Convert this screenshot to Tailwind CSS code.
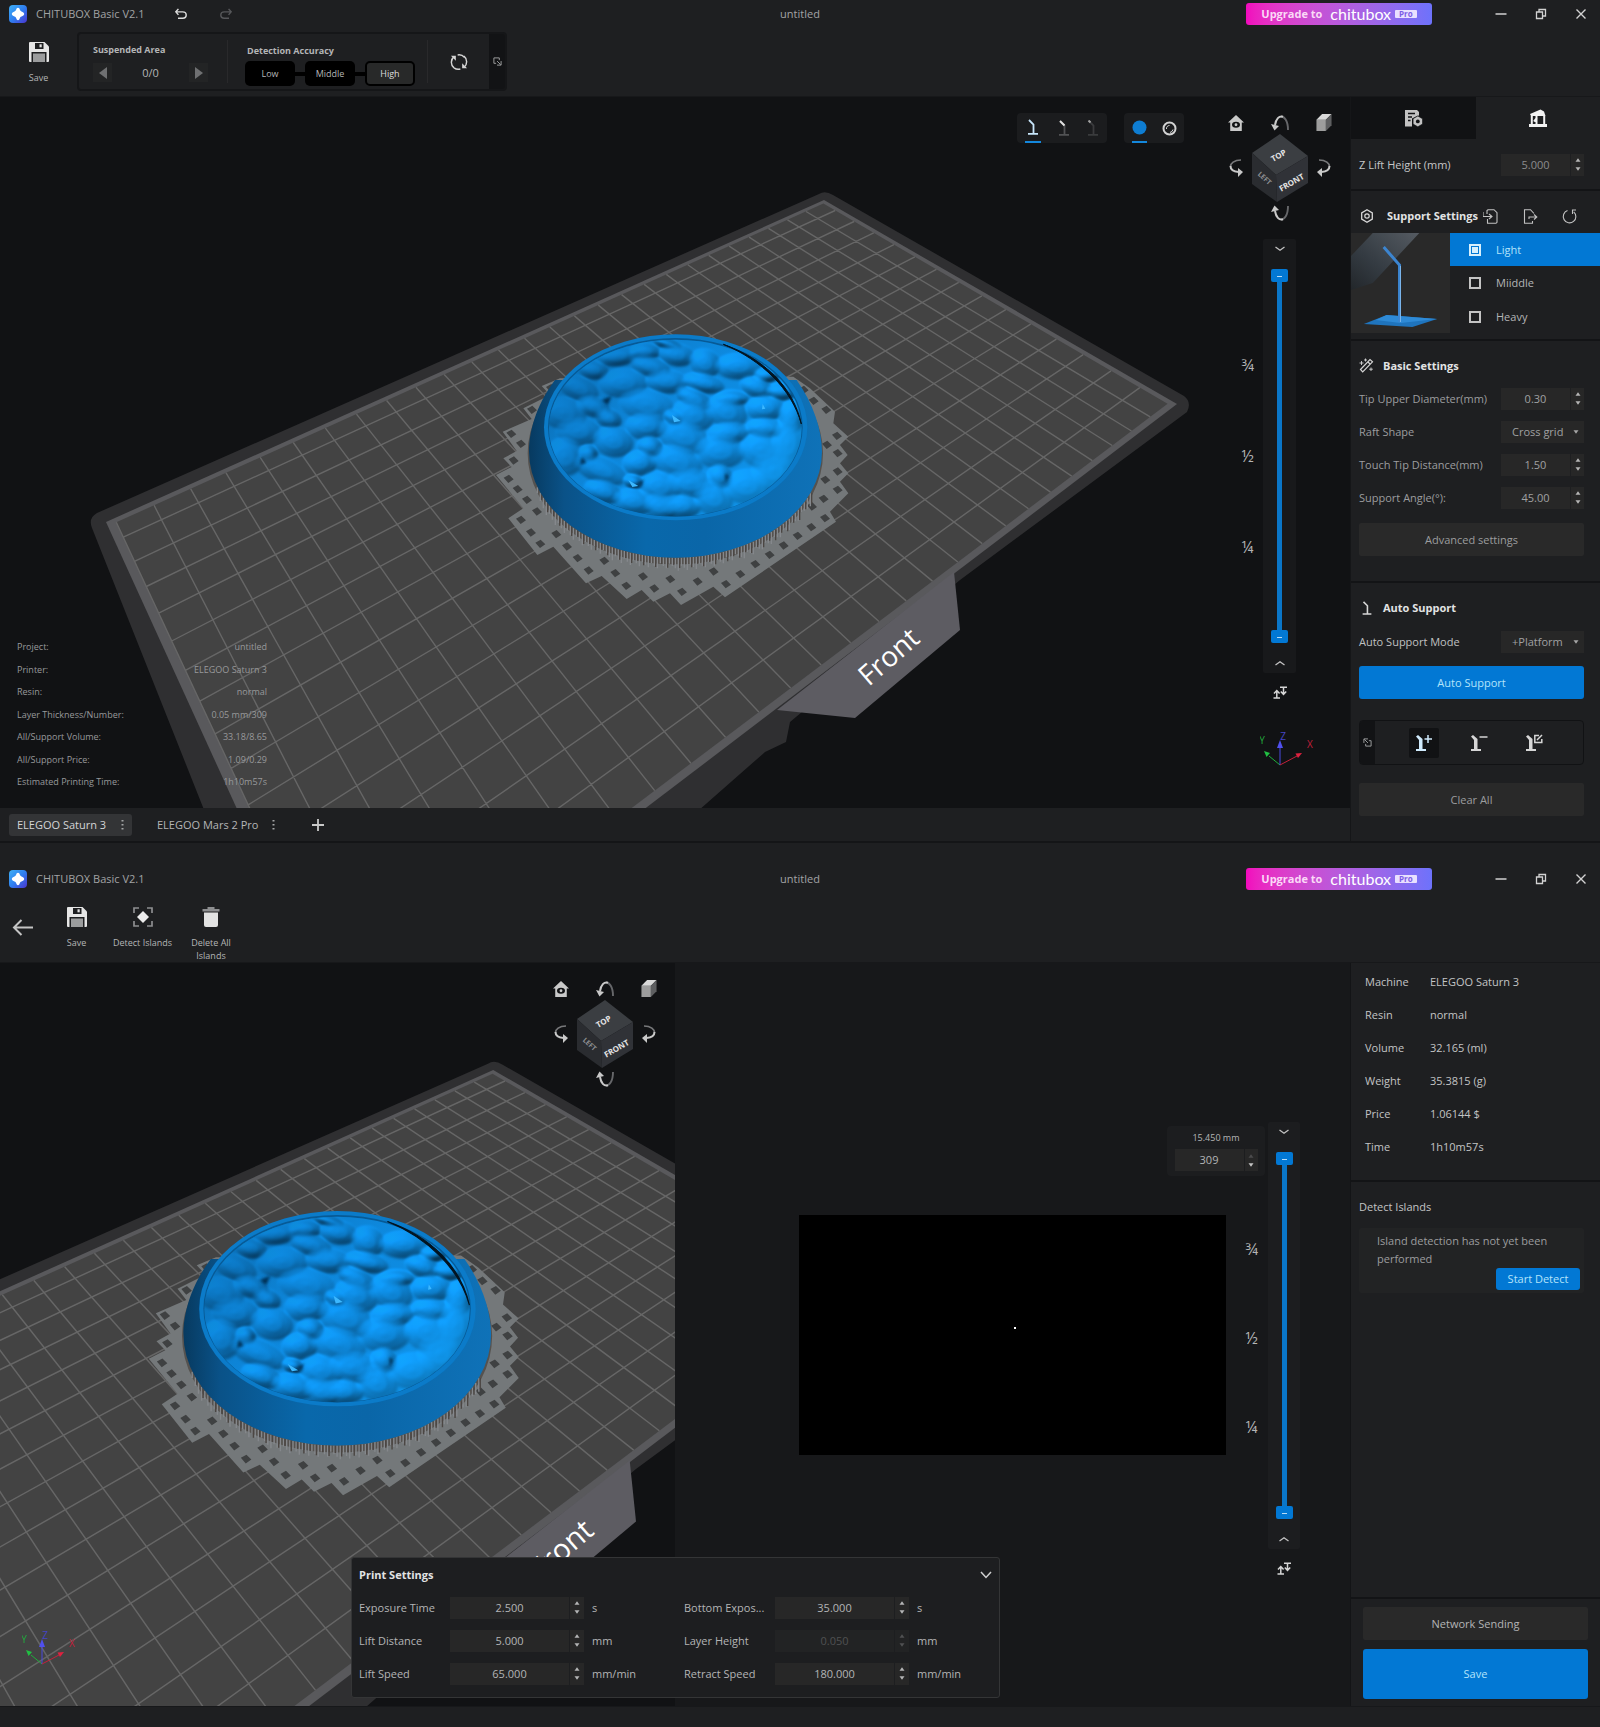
<!DOCTYPE html>
<html lang="en">
<head>
<meta charset="utf-8">
<meta name="viewport" content="width=device-width, initial-scale=1">
<title>CHITUBOX Basic V2.1</title>
<script src="https://cdn.jsdelivr.net/npm/@tailwindcss/browser@4"></script>
</head>
<body class="flex min-h-screen flex-col bg-[#1e1f21] font-['Open_Sans','Noto_Sans',sans-serif] text-[11px] leading-4 text-[#b4b5b6]">

<!-- Shared icons and the build-plate scene -->
<svg class="absolute h-0 w-0" aria-hidden="true">
  <defs>
    <linearGradient id="gLogo" x1="0" y1="0" x2="1" y2="1"><stop offset="0" stop-color="#3fb0f5"/><stop offset=".5" stop-color="#2f7ff0"/><stop offset="1" stop-color="#4a34cf"/></linearGradient>
    <linearGradient id="gBody" x1="0" y1="0" x2="1" y2="0"><stop offset="0" stop-color="#073a60"/><stop offset=".12" stop-color="#0a5288"/><stop offset=".4" stop-color="#0968ab"/><stop offset=".6" stop-color="#0a66a8"/><stop offset="1" stop-color="#0f72b8"/></linearGradient>
    <linearGradient id="gTint" x1="0" y1=".2" x2="1" y2=".8"><stop offset="0" stop-color="#05406f" stop-opacity=".45"/><stop offset=".45" stop-color="#0a6bb5" stop-opacity=".1"/><stop offset=".75" stop-color="#12a4ff" stop-opacity=".1"/><stop offset="1" stop-color="#12a8ff" stop-opacity=".6"/></linearGradient>
    <radialGradient id="gBump"><stop offset="0" stop-color="#fff"/><stop offset=".45" stop-color="#fff" stop-opacity=".82"/><stop offset=".8" stop-color="#fff" stop-opacity=".35"/><stop offset="1" stop-color="#fff" stop-opacity="0"/></radialGradient>
    <filter id="relief" x="-5%" y="-5%" width="110%" height="110%" color-interpolation-filters="sRGB"><feGaussianBlur stdDeviation="5"/><feDiffuseLighting surfaceScale="9" diffuseConstant="1.100" lighting-color="#0f96f2"><feDistantLight azimuth="235" elevation="58"/></feDiffuseLighting></filter>
    <filter id="soft" x="-20%" y="-20%" width="140%" height="140%"><feGaussianBlur stdDeviation="4"/></filter>
    <clipPath id="cTop"><ellipse cx="646" cy="384" rx="379" ry="265"/></clipPath>
    <symbol id="i-logo" viewBox="0 0 18 18"><rect width="18" height="18" rx="4" fill="url(#gLogo)"/><path d="M9 2.8c1 0 1.600.9 1.900 2 .3.900.7 1.300 1.600 1.600 1.400.500 2.700 1.400 2.700 2.600s-1.300 2-2.700 2.500c-.9.300-1.300.7-1.600 1.600-.3 1.200-.9 2.100-1.900 2.100s-1.600-.9-1.900-2.100c-.3-.9-.7-1.300-1.600-1.600C4.100 11 2.800 10.200 2.800 9s1.300-2.100 2.700-2.600c.9-.3 1.300-.7 1.600-1.600.3-1.100.9-2 1.900-2z" fill="#fff"/></symbol>
    <symbol id="i-undo" viewBox="0 0 16 14"><path d="M5 1 2 4.500 5 8M2.300 4.500H10a4 3.700 0 0 1 0 7.500H4.500" fill="none" stroke="currentColor" stroke-width="1.700"/></symbol>
    <symbol id="i-save" viewBox="0 0 20 20"><path d="M0 1a1 1 0 0 1 1-1h14.500L20 4.500V19a1 1 0 0 1-1 1H1a1 1 0 0 1-1-1z" fill="#e6e6e6"/><path d="M6 1h8.500v6H6z" fill="#1e1f21"/><path d="M10.500 2.300h2.200v3h-2.200z" fill="#e6e6e6"/><path d="M2.500 20V10h15v10z" fill="#1e1f21"/><path d="M4 20v-8.500h12V20z" fill="#9b9c9d"/></symbol>
    <symbol id="i-refresh" viewBox="0 0 20 20"><g fill="none" stroke="#d4d4d4" stroke-width="1.600"><path d="M4.500 16.500A8 8 0 0 1 4.500 4M8.500 2.200A8 8 0 0 1 16 4.800"/><path d="M15.500 3.500a8 8 0 0 1 0 12.500M11.500 17.800a8 8 0 0 1-7-1.300"/></g><path d="M1 3h5.500v5.500zM19 17h-5.500v-5.500z" fill="#d4d4d4"/></symbol>
    <symbol id="i-dock" viewBox="0 0 10 10"><path d="M3.500 7H1V1h6v2.500" fill="none" stroke="#a7a8a9" stroke-width="1"/><path d="M4.500 4.500l4 4M9 4.500V9H4.500" fill="none" stroke="#a7a8a9" stroke-width="1"/></symbol>
    <symbol id="i-min" viewBox="0 0 12 12"><path d="M.5 6h11" stroke="#d2d2d2" stroke-width="1.500"/></symbol>
    <symbol id="i-restore" viewBox="0 0 12 12"><path d="M1.500 4h6v6.500h-6zM4 4V1.500h6.500V8h-3" fill="none" stroke="#d2d2d2" stroke-width="1.300"/></symbol>
    <symbol id="i-close" viewBox="0 0 12 12"><path d="M1.500 1.500l9 9M10.500 1.500l-9 9" stroke="#d2d2d2" stroke-width="1.400"/></symbol>
    <symbol id="i-home" viewBox="0 0 18 18"><path d="M9 0 18 8.500h-2.500V18h-13V8.500H0z" fill="#c9c9c9"/><ellipse cx="9" cy="11" rx="4.500" ry="3.300" fill="#111214"/><circle cx="9" cy="11" r="1.600" fill="#c9c9c9"/></symbol>
    <symbol id="i-cubelet" viewBox="0 0 16 18"><path d="M0 6h10v12H0z" fill="#9d9d9d"/><path d="M0 6 6 0h10l-6 6z" fill="#d9d9d9"/><path d="M10 6l6-6v12l-6 6z" fill="#5e5f61"/></symbol>
    <symbol id="i-turn" viewBox="0 0 18 16"><path d="M17 15C17 5 13 1.500 10 1.500" fill="none" stroke="#66676a" stroke-width="1.900"/><path d="M12 1.700C8 .5 5 4 4 10" fill="none" stroke="#c9c9c9" stroke-width="2"/><path d="M0 9 8 11l-4.500 4.500z" fill="#c9c9c9"/></symbol>
    <symbol id="i-swing" viewBox="0 0 14 18"><path d="M12 1C5 1 1.500 4.500 1.500 7.500" fill="none" stroke="#77787a" stroke-width="1.700"/><path d="M1.500 7c0 3.500 3 5.500 8 6" fill="none" stroke="#c9c9c9" stroke-width="2"/><path d="M9 9l5 4-5 5z" fill="#c9c9c9"/></symbol>
    <symbol id="i-pillar" viewBox="0 0 12 16"><path d="M2 1l4.500 4.500V14M1 14.800h10" fill="none" stroke="currentColor" stroke-width="1.800"/></symbol>
    <symbol id="i-ends" viewBox="0 0 14 13"><path d="M.5 12h6.500M3.800 12V5M1 7.500 3.800 4.500 6.600 7.500M7 1.200h7M10.500 1.200V8M7.800 5.500l2.700 3 2.700-3" fill="none" stroke="#d6d6d6" stroke-width="1.500"/></symbol>
    <symbol id="i-down" viewBox="0 0 10 6"><path d="M.5 1 5 4.200 9.500 1" fill="none" stroke="#c4c4c4" stroke-width="1.300"/></symbol>
    <symbol id="i-up" viewBox="0 0 10 6"><path d="M.5 5 5 1.800 9.500 5" fill="none" stroke="#c4c4c4" stroke-width="1.300"/></symbol>
    <symbol id="t-up" viewBox="0 0 6 4"><path d="M3 .3 5.500 3.700H.5z" fill="currentColor"/></symbol>
    <symbol id="t-down" viewBox="0 0 6 4"><path d="M3 3.700.5.300h5z" fill="currentColor"/></symbol>
    <symbol id="i-viewcube" viewBox="0 0 58 70">
      <path d="M29 1 57 23 25 42 1 20z" fill="#3b3e42"/><path d="M1 20 25 42 26 69 1 51z" fill="#2a2c30"/><path d="M57 23 25 42 26 69 57 50z" fill="#303237"/>
      <g font-family="Open Sans, sans-serif" font-weight="700" fill="#e4e4e4" text-anchor="middle"><text transform="translate(29 25) rotate(-29)" font-size="8">TOP</text><text transform="translate(42 52) rotate(-30)" font-size="8">FRONT</text><text transform="translate(12 47) rotate(42)" font-size="7" fill="#8e9093">LEFT</text></g>
    </symbol>
    <symbol id="i-axis" viewBox="0 0 60 46" overflow="visible">
      <g stroke-width="1"><path d="M20 38 9 29" stroke="#1fae3b"/><path d="M20 38V21" stroke="#4a4ae0"/><path d="M20 38l17-9" stroke="#c3213b"/></g>
      <path d="M4 24l6 2-3.500 4z" fill="#21c043"/><path d="M20 13l3 8h-6z" fill="#5050ee"/><path d="M42 26l-4 5-2.500-4.500z" fill="#e0213f"/>
      <g font-family="Open Sans, sans-serif" font-size="10" text-anchor="middle"><text x="2" y="17" fill="#21a83d">Y</text><text x="23" y="13" fill="#4545c4">Z</text><text x="50" y="21" fill="#c11f3a">X</text></g>
    </symbol>

    <g id="scene">
      <path d="M819 194Q825 190 833 195L1184 396Q1192 402 1187 412L960 580 790 722 786 742 765 752 690 818 675 850H220L92 528Q88 518 97 513Z" fill="#2f2f31"/>
      <path id="frame" fill="#59595c"/>
      <path id="surface" fill="#434343"/>
      <path id="gridlines" fill="none" stroke="#666" stroke-width="1.400"/>
      <path d="M954 572l6 58-105 88-78-8z" fill="#5d5c62"/>
      <text transform="translate(895 664) rotate(-41)" font-family="Open Sans, sans-serif" font-size="28" fill="#fff" text-anchor="middle">Front</text>
      <g transform="translate(460 300) scale(.33333)">
        <path d="M300 235 245 258l25 27-80 40 25 32-87 38 42 58-40 22 25 26-47 24 82 100-45 30 87 110 48-25 98 110 47-22 75 69 45-27 35 35 50-25 33 35 97-55 35 32 333-227-18-30 55-55-25-35 25-25-25-30 23-25-23-30 25-25-45-40 5-35-75-70-50-35z" fill="#74787a"/>
        <path id="holes" fill="#3f4142"/>
        <ellipse cx="646" cy="460" rx="432" ry="322" fill="none" stroke="#55524f" stroke-width="22"/>
        <path id="sticks" fill="none" stroke="#85888c" stroke-width="4"/>
        <path id="gaps" fill="none" stroke="#4b4643" stroke-width="4"/>
        <path d="M207 455C207 400 225 320 285 240H1010C1060 310 1086 390 1086 455A439.500 318 0 0 1 207 455z" fill="url(#gBody)"/>
        <ellipse cx="647" cy="382" rx="395" ry="279" fill="#0b7bc9"/>
        <ellipse cx="646" cy="382" rx="382" ry="268" fill="#075a96"/>
        <g clip-path="url(#cTop)">
          <g filter="url(#relief)"><rect x="240" y="90" width="810" height="590" fill="#fff" fill-opacity=".02"/><g id="bumps" fill="url(#gBump)"></g></g>
          <ellipse cx="646" cy="384" rx="382" ry="268" fill="url(#gTint)"/>
          <path d="M425 300l30-12-12 28zM365 470l15 18-20 6zM530 550l22-12-8 20zM795 520l12 8-10 24z" fill="#042e52" filter="url(#soft)"/>
          <path d="M636 345l26 18-20 4zM505 540l30 18-18 3zM908 312l8 14-10 2z" fill="#3cb8ff"/>
        </g>
        <path d="M790 133C910 175 1000 260 1024 372C996 268 905 180 790 133z" fill="#03131f" stroke="#03131f" stroke-width="3"/>
      </g>
    </g>
  </defs>
</svg>

<!-- ============ Prepare window ============ -->
<section aria-label="Prepare" class="flex flex-col border-b-2 border-[#141517]">
  <header class="relative flex h-7 items-center pl-[9px] pr-[13px]">
    <svg class="h-[18px] w-[18px]"><use href="#i-logo"/></svg>
    <span class="ml-[9px] w-[137px] text-[#a2a3a5]">CHITUBOX Basic V2.1</span>
    <button aria-label="Undo" class="flex text-[#dcdcdc]"><svg class="h-3 w-4"><use href="#i-undo"/></svg></button>
    <button aria-label="Redo" class="ml-[29px] flex -scale-x-100 text-[#56575a]"><svg class="h-3 w-4"><use href="#i-undo"/></svg></button>
    <span class="absolute left-1/2 -translate-x-1/2 text-[#a2a3a5]">untitled</span>
    <button class="ml-auto flex h-[22px] w-[186px] items-center justify-center gap-2 rounded-[3px] bg-linear-to-r from-[#f208bd] to-[#6d72fb] font-bold text-[#fbd9f7]"><span>Upgrade to</span><span class="flex items-center gap-1"><span class="font-['Lato',sans-serif] text-[16px] font-normal text-white">chitubox</span><span class="rounded-[1px] bg-[#e9e0ff] px-1 text-[8px] leading-2 text-[#7d5be6]">Pro</span></span></button>
    <div class="ml-[63px] flex gap-7">
      <button aria-label="Minimize" class="flex"><svg class="h-3 w-3"><use href="#i-min"/></svg></button>
      <button aria-label="Restore" class="flex"><svg class="h-3 w-3"><use href="#i-restore"/></svg></button>
      <button aria-label="Close" class="flex"><svg class="h-3 w-3"><use href="#i-close"/></svg></button>
    </div>
  </header>

  <div class="flex h-[69px] items-start border-b border-[#17181a] pt-1">
    <button class="flex w-[77px] flex-col items-center gap-[10px] pt-[10px] text-[9px] leading-3"><svg class="h-5 w-5"><use href="#i-save"/></svg>Save</button>
    <div class="flex h-[59px] w-[430px] overflow-hidden rounded border-2 border-[#151618]">
      <div class="my-[6px] w-[149px] border-r border-[#29292b] pl-[14px] pt-[4px]">
        <div class="text-[9px] font-bold leading-3">Suspended Area</div>
        <div class="mt-[7px] flex w-[115px] items-center justify-between">
          <button aria-label="Previous area" class="flex h-[19px] w-[19px] items-center justify-center bg-[#232425]"><svg class="h-3 w-2" viewBox="0 0 8 12"><path d="M8 0v12L0 6z" fill="#6f7072"/></svg></button>
          <span>0/0</span>
          <button aria-label="Next area" class="flex h-[19px] w-[19px] items-center justify-center bg-[#232425]"><svg class="h-3 w-2" viewBox="0 0 8 12"><path d="M0 0v12l8-6z" fill="#6f7072"/></svg></button>
        </div>
      </div>
      <div class="my-[6px] w-[200px] border-r border-[#29292b] pl-[17px] pt-[5px]">
        <div class="pl-[2px] text-[9px] font-bold leading-3">Detection Accuracy</div>
        <div class="mt-1 flex items-center text-[9px]">
          <button class="h-[25px] w-[50px] rounded-[5px] bg-black">Low</button><span class="h-1 w-[10px] bg-black"></span>
          <button class="h-[25px] w-[50px] rounded-[5px] bg-black">Middle</button><span class="h-1 w-[10px] bg-black"></span>
          <button class="h-[25px] w-[50px] rounded-[5px] border-2 border-black bg-[#282929] text-[#dcdcdc]">High</button>
        </div>
      </div>
      <button aria-label="Refresh" class="flex flex-1 items-center justify-center"><svg class="h-[18px] w-[18px]"><use href="#i-refresh"/></svg></button>
      <button aria-label="Undock" class="flex w-4 items-center justify-center bg-[#121315]"><svg class="h-[9px] w-[9px]"><use href="#i-dock"/></svg></button>
    </div>
  </div>

  <main class="flex">
    <div class="flex min-w-0 flex-1 flex-col">
      <div class="relative flex-1 overflow-hidden bg-[#111214]">
        <svg class="absolute inset-0 h-full w-full" role="img" aria-label="Build plate with model"><use href="#scene" transform="translate(0 -97)"/></svg>

        <dl class="absolute bottom-[20px] left-[17px] flex h-[147px] w-[250px] flex-col justify-between text-[9px] leading-3 text-[#98999b]">
          <div class="flex justify-between"><dt>Project:</dt><dd>untitled</dd></div>
          <div class="flex justify-between"><dt>Printer:</dt><dd>ELEGOO Saturn 3</dd></div>
          <div class="flex justify-between"><dt>Resin:</dt><dd>normal</dd></div>
          <div class="flex justify-between"><dt>Layer Thickness/Number:</dt><dd>0.05 mm/309</dd></div>
          <div class="flex justify-between"><dt>All/Support Volume:</dt><dd>33.18/8.65</dd></div>
          <div class="flex justify-between"><dt>All/Support Price:</dt><dd>1.09/0.29</dd></div>
          <div class="flex justify-between"><dt>Estimated Printing Time:</dt><dd>1h10m57s</dd></div>
        </dl>

        <div class="absolute right-[166px] top-4 flex gap-[17px]">
          <div class="flex h-[30px] w-[90px] items-center justify-around rounded bg-[#1b1c1e]">
            <button aria-label="Show supports" class="flex h-full items-center border-b-2 border-[#1487dc] px-[2px] text-[#c8e6fb]"><svg class="h-4 w-3"><use href="#i-pillar"/></svg></button>
            <button aria-label="Show tips" class="flex text-[#515254]"><svg class="h-4 w-3"><use href="#i-pillar"/><path d="M2 1l4.500 4.500" stroke="#e2e2e2" stroke-width="2"/></svg></button>
            <button aria-label="Hide supports" class="flex text-[#3a3b3d]"><svg class="h-4 w-3"><use href="#i-pillar"/><path d="M1.500.5l2 2" stroke="#a2a2a2" stroke-width="2"/></svg></button>
          </div>
          <div class="flex h-[30px] w-[60px] items-center justify-around rounded bg-[#1b1c1e]">
            <button aria-label="Solid view" class="flex h-full items-center border-b-2 border-[#1487dc]"><svg class="h-[15px] w-[15px]" viewBox="0 0 15 15"><circle cx="7.500" cy="7.500" r="7" fill="#0e7dd2"/></svg></button>
            <button aria-label="Outline view" class="flex"><svg class="h-[15px] w-[15px]" viewBox="0 0 15 15"><circle cx="7.500" cy="7.500" r="6" fill="#1b1c1e" stroke="#d3d3d3" stroke-width="2"/><path d="M4.500 8a3 3 0 0 1 3-3.500M11 8.500a4 4 0 0 1-3 3" fill="none" stroke="#d3d3d3"/></svg></button>
          </div>
        </div>

        <div class="absolute right-[17px] top-[17px] grid w-[106px] grid-cols-[18px_1fr_18px] items-center justify-items-center gap-y-0.5">
          <button aria-label="Home view" class="flex"><svg class="h-4 w-4"><use href="#i-home"/></svg></button>
          <button aria-label="Rotate up" class="flex"><svg class="h-4 w-[18px]"><use href="#i-turn"/></svg></button>
          <button aria-label="Perspective" class="flex"><svg class="h-[17px] w-4"><use href="#i-cubelet"/></svg></button>
          <button aria-label="Rotate left" class="flex"><svg class="h-[18px] w-[14px]"><use href="#i-swing"/></svg></button>
          <svg class="h-[70px] w-[58px]"><use href="#i-viewcube"/></svg>
          <button aria-label="Rotate right" class="flex -scale-x-100"><svg class="h-[18px] w-[14px]"><use href="#i-swing"/></svg></button>
          <button aria-label="Rotate down" class="col-start-2 flex -scale-y-100"><svg class="h-4 w-[18px]"><use href="#i-turn"/></svg></button>
        </div>

        <div class="absolute right-[54px] top-[142px] flex items-center gap-[9px]">
          <div class="flex h-[198px] flex-col justify-between text-[16px] leading-4"><span>¾</span><span>½</span><span>¼</span></div>
          <div class="flex h-[434px] w-[33px] flex-col items-center justify-between rounded-[2px] bg-[#18191b] py-[7px]">
            <button aria-label="Upper layer down" class="flex"><svg class="h-[6px] w-[10px]"><use href="#i-down"/></svg></button>
            <div class="relative h-[374px] w-[17px]">
              <span class="absolute inset-y-1 left-[6px] w-[5px] bg-[#0a76c8]"></span>
              <input aria-label="Upper clip" type="range" value="100" class="absolute inset-0 m-0 h-full w-[17px] appearance-none bg-transparent [direction:rtl] [writing-mode:vertical-lr] [&::-webkit-slider-thumb]:h-[13px] [&::-webkit-slider-thumb]:w-[17px] [&::-webkit-slider-thumb]:appearance-none [&::-webkit-slider-thumb]:rounded-[2px] [&::-webkit-slider-thumb]:bg-[#0278d4]">
              <input aria-label="Lower clip" type="range" value="0" class="absolute inset-0 m-0 h-full w-[17px] appearance-none bg-transparent [direction:rtl] [writing-mode:vertical-lr] [&::-webkit-slider-thumb]:h-[13px] [&::-webkit-slider-thumb]:w-[17px] [&::-webkit-slider-thumb]:appearance-none [&::-webkit-slider-thumb]:rounded-[2px] [&::-webkit-slider-thumb]:bg-[#0278d4]">
              <span class="absolute left-[6px] top-[7px] h-px w-[5px] bg-[#b9dcf5]"></span>
              <span class="absolute bottom-[5px] left-[6px] h-px w-[5px] bg-[#b9dcf5]"></span>
            </div>
            <button aria-label="Lower layer up" class="flex"><svg class="h-[6px] w-[10px]"><use href="#i-up"/></svg></button>
          </div>
        </div>
        <button aria-label="Swap clip direction" class="absolute right-[63px] top-[589px] flex"><svg class="h-[13px] w-[14px]"><use href="#i-ends"/></svg></button>
        <svg class="absolute right-[30px] top-[630px] h-[46px] w-[60px]"><use href="#i-axis"/></svg>
      </div>

      <nav class="flex h-[33px] items-center pl-[9px]">
        <button class="flex h-[22px] w-[123px] items-center justify-between rounded-[3px] bg-[#333436] px-2 text-[#d4d5d6]">ELEGOO Saturn 3<svg class="h-3 w-[3px]" viewBox="0 0 3 12"><path d="M.5 1h2v1.500h-2zM.5 5h2v1.500h-2zM.5 9h2v1.500h-2z" fill="#a4a5a6"/></svg></button>
        <button class="flex h-[22px] w-[151px] items-center justify-between pl-[25px] pr-2">ELEGOO Mars 2 Pro<svg class="h-3 w-[3px]" viewBox="0 0 3 12"><path d="M.5 1h2v1.500h-2zM.5 5h2v1.500h-2zM.5 9h2v1.500h-2z" fill="#a4a5a6"/></svg></button>
        <button aria-label="Add printer" class="ml-[29px] flex"><svg class="h-3 w-3" viewBox="0 0 12 12"><path d="M6 0v12M0 6h12" stroke="#c9c9c9" stroke-width="1.800"/></svg></button>
      </nav>
    </div>

    <aside class="w-[250px] border-l border-[#151618] pb-[25px]">
      <div class="grid h-[42px] grid-cols-[125px_1fr]">
        <button aria-label="Slice settings" class="flex items-center justify-center bg-[#111214]"><svg class="h-[17px] w-[18px]" viewBox="0 0 18 17"><path d="M0 0h12l2 2v3.500l-2 .5-5 2.500v8H0z" fill="#c2c2c2"/><path d="M3 3.500h7M3 7h4M3 10.500h2.500" stroke="#111214" stroke-width="1.300"/><path d="M12.800 6l4.700 2.700v5.400l-4.700 2.700-4.700-2.700V8.700z" fill="#c2c2c2" stroke="#111214" stroke-width=".6"/><circle cx="12.800" cy="11.400" r="1.900" fill="#111214"/></svg></button>
        <button aria-label="Support settings" class="flex items-center justify-center"><svg class="h-[18px] w-[18px]" viewBox="0 0 18 18"><path d="M1 5 11.500.500 15 2.500 16.500 7H2z" fill="#f2f2f2"/><path d="M2.800 7v9M7.500 7v9M15.200 7v9M8 8.500l-3 4" stroke="#f2f2f2" stroke-width="2"/><path d="M0 15h18v3H0z" fill="#f2f2f2"/></svg></button>
      </div>
      <div class="flex h-[52px] items-center justify-between border-b-2 border-[#131416] pl-2 pr-4 pt-px">
        <label for="zlift" class="text-[#c6c7c8]">Z Lift Height (mm)</label>
        <div class="flex h-[22px] w-[83px] gap-px"><input id="zlift" value="5.000" class="w-[69px] bg-[#272727] text-center text-[#8b8c8d]"><div class="flex w-[13px] flex-col items-center justify-around bg-[#272727] py-[2px] text-[#b5b5b5]"><button aria-label="Increase" class="flex"><svg class="h-1 w-[6px]"><use href="#t-up"/></svg></button><button aria-label="Decrease" class="flex"><svg class="h-1 w-[6px]"><use href="#t-down"/></svg></button></div></div>
      </div>

      <div class="border-b-2 border-[#131416] pb-[6px]">
        <div class="flex h-[42px] items-center pl-[10px] pr-[23px] pt-2">
          <svg class="h-[14px] w-3" viewBox="0 0 12 14"><path d="M6 .8 11.300 3.900v6.200L6 13.200.7 10.100V3.900z" fill="none" stroke="#d9d9d9" stroke-width="1.300"/><circle cx="6" cy="7" r="2.200" fill="none" stroke="#d9d9d9" stroke-width="1.200"/></svg>
          <h2 class="ml-[14px] w-[96px] whitespace-nowrap font-bold text-[#e2e3e4]">Support Settings</h2>
          <div class="flex flex-1 justify-between">
            <button aria-label="Import" class="flex"><svg class="h-[15px] w-[15px]" viewBox="0 0 15 15"><path d="M4 5V1.500L5 .700h6l3 3v9.600l-1 1H4.500V10M0 3v4.500h8.500M6 5l3 2.500L6 10" fill="none" stroke="#c2c2c2" stroke-width="1.100"/></svg></button>
            <button aria-label="Export" class="flex"><svg class="h-[15px] w-[15px]" viewBox="0 0 15 15"><path d="M11 4.500 7.500.700h-6v13.600h8V12M6 10V8h7.500M11 5.500 13.800 8 11 10.500" fill="none" stroke="#c2c2c2" stroke-width="1.100"/></svg></button>
            <button aria-label="Reset" class="flex"><svg class="h-[15px] w-[15px]" viewBox="0 0 15 15"><path d="M5.500 1.600a6.300 6.300 0 1 0 6.200 1.200M14 1h-3.500v4" fill="none" stroke="#c2c2c2" stroke-width="1.100"/></svg></button>
          </div>
        </div>
        <div class="flex">
          <svg class="h-[100px] w-[99px] bg-[#292929]" viewBox="0 0 100 100" preserveAspectRatio="none"><defs><linearGradient id="gBeam" x1="1" y1="0" x2="0" y2="1"><stop offset="0" stop-color="#555b62"/><stop offset=".6" stop-color="#343b42"/><stop offset="1" stop-color="#22262a"/></linearGradient></defs><path d="M22 0H69L22 50 0 57V23z" fill="url(#gBeam)"/><path d="M36 82 87 86 62 94 13 91z" fill="#1f74bd"/><path d="M36 82 87 86 50 90 25 87z" fill="#2e8ad6"/><path d="M33 14l16 18v57" fill="none" stroke="#3c85d0" stroke-width="3"/><path d="M50 33v56" stroke="#7bb4ea" stroke-width="1"/></svg>
          <div class="flex-1">
            <label class="flex h-[33px] items-center bg-[#0278d4] pl-[19px] text-[#b3e4fb]"><input type="radio" name="preset" checked class="mr-[15px] h-3 w-3 appearance-none border-2 border-[#d8f0fc] bg-[#d8f0fc] bg-clip-content p-px">Light</label>
            <label class="flex h-[34px] items-center pl-[19px]"><input type="radio" name="preset" class="mr-[15px] h-3 w-3 appearance-none border-2 border-[#c4c4c4]">Miiddle</label>
            <label class="flex h-[33px] items-center pl-[19px]"><input type="radio" name="preset" class="mr-[15px] h-3 w-3 appearance-none border-2 border-[#c4c4c4]">Heavy</label>
          </div>
        </div>
      </div>

      <div class="border-b-2 border-[#131416] pb-[25px] pl-2 pr-4 pt-2 text-[#9c9d9f]">
        <h2 class="flex h-[33px] items-center gap-[9px] font-bold text-[#e2e3e4]"><svg class="h-[15px] w-[15px]" viewBox="0 0 15 15"><path d="M1.500 11.500 11 1.500l2.500 2.300-9.800 10zM9 4l2 2" fill="none" stroke="#d6d6d6" stroke-width="1.200"/><path d="M2.500 3v4M.5 5h4M6.500.5v3M5 2h3M12 9.500v3.500M10.200 11.200h3.600" stroke="#d6d6d6" stroke-width=".9"/></svg>Basic Settings</h2>
        <div class="flex h-[33px] items-center justify-between"><label for="tip">Tip Upper Diameter(mm)</label>
          <div class="flex h-[22px] w-[83px] gap-px"><input id="tip" value="0.30" class="w-[69px] bg-[#272727] text-center text-[#a0a1a2]"><div class="flex w-[13px] flex-col items-center justify-around bg-[#272727] py-[2px] text-[#b5b5b5]"><button aria-label="Increase" class="flex"><svg class="h-1 w-[6px]"><use href="#t-up"/></svg></button><button aria-label="Decrease" class="flex"><svg class="h-1 w-[6px]"><use href="#t-down"/></svg></button></div></div></div>
        <div class="flex h-[33px] items-center justify-between"><label for="raft">Raft Shape</label>
          <div class="relative w-[83px]"><select id="raft" class="h-[22px] w-full appearance-none bg-[#272727] pl-[11px] text-[#a0a1a2]"><option>Cross grid</option></select><svg class="absolute right-[5px] top-[9px] h-1 w-[6px] text-[#a5a5a5]"><use href="#t-down"/></svg></div></div>
        <div class="flex h-[33px] items-center justify-between"><label for="touch">Touch Tip Distance(mm)</label>
          <div class="flex h-[22px] w-[83px] gap-px"><input id="touch" value="1.50" class="w-[69px] bg-[#272727] text-center text-[#a0a1a2]"><div class="flex w-[13px] flex-col items-center justify-around bg-[#272727] py-[2px] text-[#b5b5b5]"><button aria-label="Increase" class="flex"><svg class="h-1 w-[6px]"><use href="#t-up"/></svg></button><button aria-label="Decrease" class="flex"><svg class="h-1 w-[6px]"><use href="#t-down"/></svg></button></div></div></div>
        <div class="flex h-[33px] items-center justify-between"><label for="angle">Support Angle(°):</label>
          <div class="flex h-[22px] w-[83px] gap-px"><input id="angle" value="45.00" class="w-[69px] bg-[#272727] text-center text-[#a0a1a2]"><div class="flex w-[13px] flex-col items-center justify-around bg-[#272727] py-[2px] text-[#b5b5b5]"><button aria-label="Increase" class="flex"><svg class="h-1 w-[6px]"><use href="#t-up"/></svg></button><button aria-label="Decrease" class="flex"><svg class="h-1 w-[6px]"><use href="#t-down"/></svg></button></div></div></div>
        <button class="mt-[9px] h-[33px] w-full rounded-[2px] bg-[#292929]">Advanced settings</button>
      </div>

      <div class="pl-2 pr-4 pt-2">
        <h2 class="flex h-[34px] items-center gap-[10px] pl-[2px] font-bold text-[#e2e3e4]"><svg class="h-[14px] w-3 text-[#d6d6d6]"><use href="#i-pillar"/></svg>Auto Support</h2>
        <div class="flex h-[33px] items-center justify-between"><label for="mode" class="text-[#c0c1c2]">Auto Support Mode</label>
          <div class="relative w-[83px]"><select id="mode" class="h-[22px] w-full appearance-none bg-[#272727] pl-[11px] text-[#a0a1a2]"><option>+Platform</option></select><svg class="absolute right-[5px] top-[9px] h-1 w-[6px] text-[#a5a5a5]"><use href="#t-down"/></svg></div></div>
        <button class="mt-2 h-[33px] w-full rounded-[3px] bg-[#0278d4] text-[#b3e4fb]">Auto Support</button>
        <div class="mt-[21px] flex h-[45px] overflow-hidden rounded border border-[#111214]">
          <button aria-label="Dock tools" class="flex w-[15px] items-center justify-center bg-[#121315]"><svg class="h-[9px] w-[9px] rotate-180"><use href="#i-dock"/></svg></button>
          <div class="flex flex-1 items-center justify-center gap-[25px]">
            <button aria-label="Add support" class="flex h-[30px] w-[30px] items-center justify-center rounded-[2px] bg-[#111214]"><svg class="h-[18px] w-[18px]" viewBox="0 0 18 18"><path d="M1 2.500 3 1l4.500 4v10h3.500v2H1v-2h3V6z" fill="#cfeafc"/><path d="M13 1v8M9.500 5h7.500" stroke="#cfeafc" stroke-width="1.500"/></svg></button>
            <button aria-label="Remove support" class="flex h-[30px] w-[30px] items-center justify-center"><svg class="h-[18px] w-[18px]" viewBox="0 0 18 18"><path d="M1 2.500 3 1l4.500 4v10h3.500v2H1v-2h3V6z" fill="#d6d6d6"/><path d="M9.500 3h8" stroke="#d6d6d6" stroke-width="1.500"/></svg></button>
            <button aria-label="Edit support" class="flex h-[30px] w-[30px] items-center justify-center"><svg class="h-[18px] w-[18px]" viewBox="0 0 18 18"><path d="M1 2.500 3 1l4.500 4v10h3.500v2H1v-2h3V6z" fill="#d6d6d6"/><path d="M14 1.500H9.800v7h7V5M12 6l5-5" fill="none" stroke="#d6d6d6" stroke-width="1.500"/></svg></button>
          </div>
        </div>
        <button class="mt-[18px] h-[33px] w-full rounded-[2px] bg-[#292929] text-[#9c9d9f]">Clear All</button>
      </div>
    </aside>
  </main>
</section>

<!-- ============ Preview window ============ -->
<section aria-label="Preview" class="flex flex-1 flex-col pt-[22px]">
  <header class="relative flex h-7 items-center pl-[9px] pr-[13px]">
    <svg class="h-[18px] w-[18px]"><use href="#i-logo"/></svg>
    <span class="ml-[9px] text-[#a2a3a5]">CHITUBOX Basic V2.1</span>
    <span class="absolute left-1/2 -translate-x-1/2 text-[#a2a3a5]">untitled</span>
    <button class="ml-auto flex h-[22px] w-[186px] items-center justify-center gap-2 rounded-[3px] bg-linear-to-r from-[#f208bd] to-[#6d72fb] font-bold text-[#fbd9f7]"><span>Upgrade to</span><span class="flex items-center gap-1"><span class="font-['Lato',sans-serif] text-[16px] font-normal text-white">chitubox</span><span class="rounded-[1px] bg-[#e9e0ff] px-1 text-[8px] leading-2 text-[#7d5be6]">Pro</span></span></button>
    <div class="ml-[63px] flex gap-7">
      <button aria-label="Minimize" class="flex"><svg class="h-3 w-3"><use href="#i-min"/></svg></button>
      <button aria-label="Restore" class="flex"><svg class="h-3 w-3"><use href="#i-restore"/></svg></button>
      <button aria-label="Close" class="flex"><svg class="h-3 w-3"><use href="#i-close"/></svg></button>
    </div>
  </header>

  <div class="flex h-[70px] items-start border-b border-[#17181a] pl-3 pt-[14px] text-[9px] leading-[13px]">
    <button aria-label="Back" class="mr-[11px] mt-3 flex"><svg class="h-[17px] w-[21px]" viewBox="0 0 21 17"><path d="M21 8.500H2M9.500 1 2 8.500 9.500 16" fill="none" stroke="#c4c4c4" stroke-width="2"/></svg></button>
    <button class="flex w-[65px] flex-col items-center gap-[9px]"><svg class="h-5 w-5"><use href="#i-save"/></svg>Save</button>
    <button class="flex w-[67px] flex-col items-center gap-[9px]"><svg class="h-5 w-5" viewBox="0 0 20 20"><path d="M1 6V1h5M14 1h5v5M19 14v5h-5M6 19H1v-5" fill="none" stroke="#8d8e90" stroke-width="1.700"/><path d="M10 4l6 6-6 6-6-6z" fill="#ececec"/></svg>Detect Islands</button>
    <button class="flex w-[70px] flex-col items-center gap-[9px]"><svg class="h-5 w-5" viewBox="0 0 20 20"><path d="M6.500 0h7v2h5v2.500h-17V2h5z" fill="#8d8e90"/><path d="M3 5.500h14V18a2 2 0 0 1-2 2H5a2 2 0 0 1-2-2z" fill="#e2e2e2"/></svg><span>Delete All<br>Islands</span></button>
  </div>

  <main class="relative flex flex-1">
    <div class="relative flex-1 overflow-hidden bg-[#111214]">
      <svg class="absolute inset-0 h-full w-full" role="img" aria-label="Build plate with model"><use href="#scene" transform="translate(-372 -103) scale(1.050)"/></svg>
      <div class="absolute right-[17px] top-[17px] grid w-[106px] grid-cols-[18px_1fr_18px] items-center justify-items-center gap-y-0.5">
        <button aria-label="Home view" class="flex"><svg class="h-4 w-4"><use href="#i-home"/></svg></button>
        <button aria-label="Rotate up" class="flex"><svg class="h-4 w-[18px]"><use href="#i-turn"/></svg></button>
        <button aria-label="Perspective" class="flex"><svg class="h-[17px] w-4"><use href="#i-cubelet"/></svg></button>
        <button aria-label="Rotate left" class="flex"><svg class="h-[18px] w-[14px]"><use href="#i-swing"/></svg></button>
        <svg class="h-[70px] w-[58px]"><use href="#i-viewcube"/></svg>
        <button aria-label="Rotate right" class="flex -scale-x-100"><svg class="h-[18px] w-[14px]"><use href="#i-swing"/></svg></button>
        <button aria-label="Rotate down" class="col-start-2 flex -scale-y-100"><svg class="h-4 w-[18px]"><use href="#i-turn"/></svg></button>
      </div>
      <svg class="absolute bottom-[34px] left-[22px] h-[46px] w-[60px]"><use href="#i-axis"/></svg>
    </div>

    <div class="relative flex-1 bg-[#17181a]">
      <div class="absolute left-[124px] top-[252px] flex h-[240px] w-[427px] items-center justify-center bg-black pb-[14px] pl-1"><span class="h-[2px] w-[2px] bg-white"></span></div>
      <div class="absolute right-[50px] top-[159px] flex items-start gap-[3px]">
        <div class="mt-1 flex h-[50px] w-[98px] flex-col items-center gap-[5px] rounded bg-[#1c1d1f] pt-[6px]">
          <label for="layer" class="text-[9px] leading-3">15.450 mm</label>
          <div class="flex h-[22px] w-[83px] gap-px"><input id="layer" value="309" class="w-[69px] bg-[#272727] text-center"><div class="flex w-[13px] flex-col items-center justify-around bg-[#272727] py-[2px]"><button aria-label="Increase" class="flex text-[#4b4b4c]"><svg class="h-1 w-[6px]"><use href="#t-up"/></svg></button><button aria-label="Decrease" class="flex text-[#c5c5c5]"><svg class="h-1 w-[6px]"><use href="#t-down"/></svg></button></div></div>
        </div>
        <div class="flex h-[427px] w-8 flex-col items-center justify-between rounded-[2px] bg-[#1c1d1f] py-[7px]">
          <button aria-label="Upper layer down" class="flex"><svg class="h-[6px] w-[10px]"><use href="#i-down"/></svg></button>
          <div class="relative h-[367px] w-[17px]">
            <span class="absolute inset-y-1 left-[6px] w-[5px] bg-[#0a76c8]"></span>
            <input aria-label="Upper layer" type="range" value="100" class="absolute inset-0 m-0 h-full w-[17px] appearance-none bg-transparent [direction:rtl] [writing-mode:vertical-lr] [&::-webkit-slider-thumb]:h-[13px] [&::-webkit-slider-thumb]:w-[17px] [&::-webkit-slider-thumb]:appearance-none [&::-webkit-slider-thumb]:rounded-[2px] [&::-webkit-slider-thumb]:bg-[#0278d4]">
            <input aria-label="Lower layer" type="range" value="0" class="absolute inset-0 m-0 h-full w-[17px] appearance-none bg-transparent [direction:rtl] [writing-mode:vertical-lr] [&::-webkit-slider-thumb]:h-[13px] [&::-webkit-slider-thumb]:w-[17px] [&::-webkit-slider-thumb]:appearance-none [&::-webkit-slider-thumb]:rounded-[2px] [&::-webkit-slider-thumb]:bg-[#0278d4]">
            <span class="absolute left-[6px] top-[7px] h-px w-[5px] bg-[#b9dcf5]"></span>
            <span class="absolute bottom-[5px] left-[6px] h-px w-[5px] bg-[#b9dcf5]"></span>
          </div>
          <button aria-label="Lower layer up" class="flex"><svg class="h-[6px] w-[10px]"><use href="#i-up"/></svg></button>
        </div>
      </div>
      <div class="absolute right-[92px] top-[278px] flex h-[194px] flex-col justify-between text-[16px] leading-4"><span>¾</span><span>½</span><span>¼</span></div>
      <button aria-label="Swap clip direction" class="absolute right-[59px] top-[599px] flex"><svg class="h-[13px] w-[14px]"><use href="#i-ends"/></svg></button>
    </div>

    <section class="absolute bottom-2 left-[351px] w-[649px] rounded-[3px] border border-[#343536] bg-[#1d1e20] px-[7px] pb-[7px]">
      <div class="flex h-[33px] items-center justify-between"><h2 class="font-bold text-[#e2e3e4]">Print Settings</h2><button aria-label="Collapse" class="flex"><svg class="h-2 w-3" viewBox="0 0 12 8"><path d="M1 1l5 5.500L11 1" fill="none" stroke="#d0d0d0" stroke-width="1.500"/></svg></button></div>
      <div class="grid grid-cols-[91px_134px_100px_91px_134px_1fr] items-center [&>*]:my-[5px] [&>*]:leading-[23px]">
        <label for="p1">Exposure Time</label><div class="flex h-[22px] gap-px"><input id="p1" value="2.500" class="w-[119px] bg-[#272727] text-center"><div class="flex w-[14px] flex-col items-center justify-around bg-[#272727] py-[2px]"><button aria-label="Increase" class="flex"><svg class="h-1 w-[6px]"><use href="#t-up"/></svg></button><button aria-label="Decrease" class="flex"><svg class="h-1 w-[6px]"><use href="#t-down"/></svg></button></div></div><span class="pl-2">s</span>
        <label for="p2">Bottom Expos...</label><div class="flex h-[22px] gap-px"><input id="p2" value="35.000" class="w-[119px] bg-[#272727] text-center"><div class="flex w-[14px] flex-col items-center justify-around bg-[#272727] py-[2px]"><button aria-label="Increase" class="flex"><svg class="h-1 w-[6px]"><use href="#t-up"/></svg></button><button aria-label="Decrease" class="flex"><svg class="h-1 w-[6px]"><use href="#t-down"/></svg></button></div></div><span class="pl-2">s</span>
        <label for="p3">Lift Distance</label><div class="flex h-[22px] gap-px"><input id="p3" value="5.000" class="w-[119px] bg-[#272727] text-center"><div class="flex w-[14px] flex-col items-center justify-around bg-[#272727] py-[2px]"><button aria-label="Increase" class="flex"><svg class="h-1 w-[6px]"><use href="#t-up"/></svg></button><button aria-label="Decrease" class="flex"><svg class="h-1 w-[6px]"><use href="#t-down"/></svg></button></div></div><span class="pl-2">mm</span>
        <label for="p4">Layer Height</label><div class="flex h-[22px] gap-px text-[#505152]"><input id="p4" value="0.050" disabled class="w-[119px] bg-[#222324] text-center"><div class="flex w-[14px] flex-col items-center justify-around bg-[#222324] py-[2px]"><button disabled aria-label="Increase" class="flex"><svg class="h-1 w-[6px]"><use href="#t-up"/></svg></button><button disabled aria-label="Decrease" class="flex"><svg class="h-1 w-[6px]"><use href="#t-down"/></svg></button></div></div><span class="pl-2">mm</span>
        <label for="p5">Lift Speed</label><div class="flex h-[22px] gap-px"><input id="p5" value="65.000" class="w-[119px] bg-[#272727] text-center"><div class="flex w-[14px] flex-col items-center justify-around bg-[#272727] py-[2px]"><button aria-label="Increase" class="flex"><svg class="h-1 w-[6px]"><use href="#t-up"/></svg></button><button aria-label="Decrease" class="flex"><svg class="h-1 w-[6px]"><use href="#t-down"/></svg></button></div></div><span class="pl-2">mm/min</span>
        <label for="p6">Retract Speed</label><div class="flex h-[22px] gap-px"><input id="p6" value="180.000" class="w-[119px] bg-[#272727] text-center"><div class="flex w-[14px] flex-col items-center justify-around bg-[#272727] py-[2px]"><button aria-label="Increase" class="flex"><svg class="h-1 w-[6px]"><use href="#t-up"/></svg></button><button aria-label="Decrease" class="flex"><svg class="h-1 w-[6px]"><use href="#t-down"/></svg></button></div></div><span class="pl-2">mm/min</span>
      </div>
    </section>

    <aside class="flex w-[250px] flex-col border-l border-[#131416]">
      <dl class="grid grid-cols-[65px_1fr] border-b-2 border-[#131416] pb-[17px] pl-[14px] pt-[2px] leading-[33px] text-[#c3c4c5]">
        <dt>Machine</dt><dd>ELEGOO Saturn 3</dd>
        <dt>Resin</dt><dd>normal</dd>
        <dt>Volume</dt><dd>32.165 (ml)</dd>
        <dt>Weight</dt><dd>35.3815 (g)</dd>
        <dt>Price</dt><dd>1.06144 $</dd>
        <dt>Time</dt><dd>1h10m57s</dd>
      </dl>
      <div class="pl-2 pr-4 pt-[17px]">
        <h2 class="text-[#c3c4c5]">Detect Islands</h2>
        <div class="mt-[13px] flex flex-col rounded-[2px] bg-[#222324] pb-[3px] pl-[18px] pr-1 pt-1 text-[#9c9d9f]">
          <p class="leading-[18px]">Island detection has not yet been performed</p>
          <button class="h-[22px] w-[84px] self-end rounded-[3px] bg-[#0278d4] text-[#b3e4fb]">Start Detect</button>
        </div>
      </div>
      <div class="mt-auto flex flex-col gap-[9px] border-t-2 border-[#131416] pb-[7px] pl-3 pr-3 pt-2">
        <button class="h-[33px] rounded-[2px] bg-[#292929]">Network Sending</button>
        <button class="h-[50px] rounded-[3px] bg-[#0278d4] text-[#b3e4fb]">Save</button>
      </div>
    </aside>
  </main>
  <footer class="h-[21px] border-t border-[#17181a]"></footer>
</section>

<script>
  // Maps plate coordinates (0..1, 0..1) to the screen through the four plate corners.
  function plate(a, b, c, d) {
    const dx1 = b[0] - c[0], dx2 = d[0] - c[0], sx = a[0] - b[0] + c[0] - d[0];
    const dy1 = b[1] - c[1], dy2 = d[1] - c[1], sy = a[1] - b[1] + c[1] - d[1];
    const den = dx1 * dy2 - dx2 * dy1;
    const g = (sx * dy2 - dx2 * sy) / den, h = (dx1 * sy - sx * dy1) / den;
    return (u, v) => {
      const w = g * u + h * v + 1;
      return [((b[0] - a[0] + g * b[0]) * u + (d[0] - a[0] + h * d[0]) * v + a[0]) / w,
              ((b[1] - a[1] + g * b[1]) * u + (d[1] - a[1] + h * d[1]) * v + a[1]) / w].map(n => n.toFixed(1)).join(' ');
    };
  }
  // back, left, near and right corners
  const at = plate([824, 200], [106, 522], [342, 1039], [1177, 404]);
  const quad = (p, q) => `M${at(p, p)}L${at(q, p)}L${at(q, q)}L${at(p, q)}Z`;
  document.getElementById('frame').setAttribute('d', quad(0, 1));
  document.getElementById('surface').setAttribute('d', `M${at(.008, .012)}L${at(.992, .012)}L${at(.992, .988)}L${at(.008, .988)}Z`);
  let lines = '';
  for (let u = .992; u > .008; u -= .0365) lines += `M${at(u, .012)}L${at(u, .988)}`;
  for (let v = .055; v < .988; v += .067) lines += `M${at(.008, v)}L${at(.992, v)}`;
  document.getElementById('gridlines').setAttribute('d', lines);

  // Holes of the cross-grid raft
  const holes = [[272,265],[215,330],[153,402],[182,432],[160,482],[145,537],[172,568],[200,600],[230,635],[182,660],[212,698],[240,732],[288,703],[320,740],[352,775],[385,812],[432,783],[465,820],[498,858],[548,830],[582,866],[630,838],[665,876],[712,845],[760,815],[797,853],[840,823],[885,793],[928,765],[970,737],[1012,708],[1053,682],[1094,655],[1132,570],[1090,597],[1055,620],[1132,515],[1095,540],[1132,460],[1130,408],[1098,330],[1060,303],[1030,270],[1100,435]];
  document.getElementById('holes').setAttribute('d', holes.map(([x, y]) => `M${x - 14} ${y - 4}l16-9 14 14-16 11z`).join(''));

  // Support pillars under the lower edge of the model
  let sticks = '', gaps = '';
  for (let x = 232, i = 0; x < 1060; x += 9, i++) {
    const y = 455 + 318 * Math.sqrt(1 - ((x - 646.5) / 440) ** 2);
    sticks += `M${x} ${y.toFixed(0)}v${18 + (i * 7) % 22}`;
    if (i % 2) gaps += `M${x + 4} ${y.toFixed(0)}v${16 + (i * 5) % 20}`;
  }
  document.getElementById('sticks').setAttribute('d', sticks);
  document.getElementById('gaps').setAttribute('d', gaps);

  // Cobblestone relief: cx, cy, rx, ry
  const stones = [[470,170,50,22],[555,155,35,20],[650,165,42,26],[620,130,35,12],[735,190,38,32],[835,200,55,30],[400,210,35,22],[570,200,48,24],[355,265,50,28],[490,250,58,34],[620,245,50,28],[730,250,50,22],[890,262,40,24],[920,225,30,18],[965,275,35,20],[560,315,65,38],[400,320,40,24],[700,295,45,22],[815,295,40,18],[310,340,55,38],[700,345,50,38],[800,335,50,38],[915,325,45,30],[995,350,30,40],[640,352,24,18],[445,355,32,22],[560,378,50,32],[355,395,52,34],[460,425,48,36],[670,410,62,40],[805,400,50,26],[915,385,45,24],[570,440,30,24],[385,460,22,20],[315,470,45,45],[780,455,60,40],[905,450,52,42],[650,485,62,38],[420,510,65,30],[540,490,40,30],[985,430,40,60],[520,545,24,16],[780,530,30,28],[860,560,55,40],[690,550,55,36],[600,560,50,36],[430,575,45,26],[760,595,48,40],[660,620,50,28],[520,605,50,30],[600,620,40,30],[940,510,50,50]];
  document.getElementById('bumps').innerHTML = stones.map(([x, y, a, b], i) => `<ellipse cx="${x}" cy="${y}" rx="${Math.round(a * 1.3)}" ry="${Math.round(b * 1.3)}" transform="rotate(${(i * 37) % 30 - 5} ${x} ${y})"/>`).join('');
</script>
</body>
</html>
